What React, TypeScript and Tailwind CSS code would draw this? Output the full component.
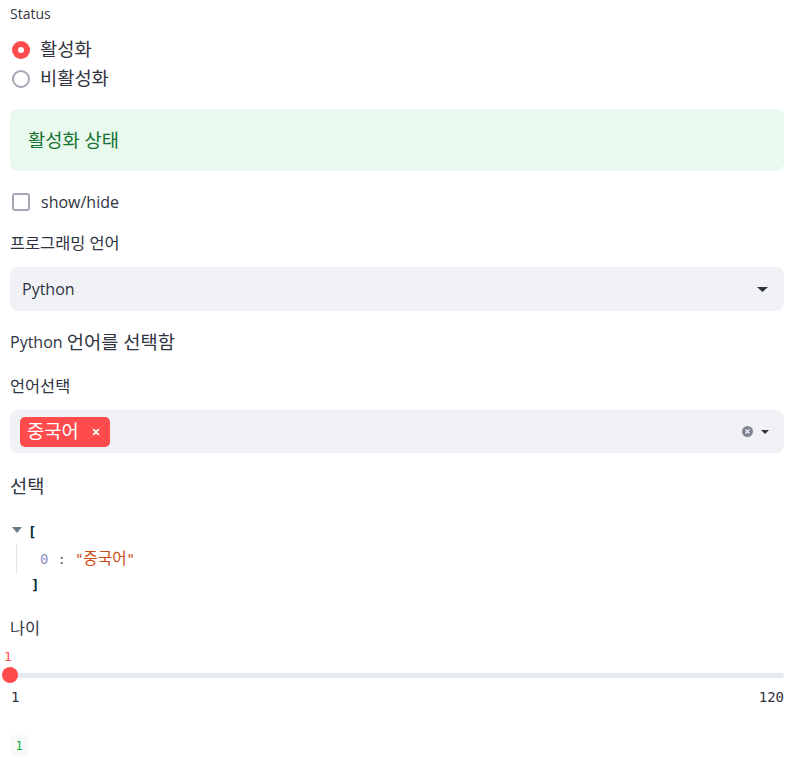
import React from "react";

const sans = { fontFamily: '"Open Sans", "Noto Sans CJK KR", sans-serif' };
const mono = { fontFamily: '"DejaVu Sans Mono", "Noto Sans CJK KR", monospace' };

function K({ children }: { children: React.ReactNode }) {
  return <span className="text-[1.17em] leading-none">{children}</span>;
}

export default function App() {
  return (
    <div className="w-[807px] h-[760px] bg-white text-[#31333f] pl-[10px] pr-[23px] overflow-hidden" style={sans}>
      {/* Status radio */}
      <div className="pt-[4px] h-[24px] text-[14px] leading-[20px]">Status</div>
      <div className="mt-[13px] flex flex-col gap-[4px]">
        <div className="flex items-center h-[25px]">
          <span className="w-[18px] h-[18px] ml-[2px] rounded-full bg-[#ff4b4b] flex items-center justify-center">
            <span className="w-[6px] h-[6px] rounded-full bg-white" />
          </span>
          <span className="ml-[10px] text-[16px]"><K>활성화</K></span>
        </div>
        <div className="flex items-center h-[25px]">
          <span className="w-[18px] h-[18px] ml-[2px] rounded-full border-2 border-[#a3a8b4]" />
          <span className="ml-[10px] text-[16px]"><K>비활성화</K></span>
        </div>
      </div>

      {/* success box */}
      <div className="mt-[18px] h-[62px] rounded-[8px] bg-[#e8f9ee] flex items-center px-[18px] text-[16px] text-[#177233]">
        <K>활성화 상태</K>
      </div>

      {/* checkbox */}
      <div className="mt-[20px] flex items-center h-[22px]">
        <span className="w-[18px] h-[18px] ml-[2px] rounded-[3px] border-2 border-[#a3a8b4]" />
        <span className="ml-[11px] text-[16px]">show/hide</span>
      </div>

      <div className="mt-[20px] h-[20px] flex items-center text-[14px]"><K>프로그래밍 언어</K></div>
      <div className="mt-[14px] h-[44px] rounded-[8px] bg-[#f0f2f6] flex items-center px-[12px]">
        <span className="text-[16px] flex-1">Python</span>
        <svg width="11" height="5" viewBox="0 0 11 5" className="mr-[4px]">
          <path d="M0 0 L11 0 L5.5 5 Z" fill="#31333f" />
        </svg>
      </div>

      <div className="mt-[20px] h-[22px] flex items-center text-[16px] whitespace-pre">Python <K>언어를 선택함</K></div>

      <div className="mt-[23px] h-[20px] flex items-center text-[14px]"><K>언어선택</K></div>
      <div className="mt-[14px] h-[43px] rounded-[8px] bg-[#f0f2f6] flex items-center pl-[10px] pr-[15px]">
        <div className="flex-1 flex">
          <span className="inline-flex items-center h-[30px] rounded-[5px] bg-[#ff4b4b] text-white pl-[7px] pr-[10px] text-[16px]">
            <K>중국어</K>
            <svg width="8" height="8" viewBox="0 0 10 10" className="ml-[13px]">
              <path d="M1.5 1.5 L8.5 8.5 M8.5 1.5 L1.5 8.5" stroke="white" strokeWidth="2.2" />
            </svg>
          </span>
        </div>
        <svg width="11" height="11" viewBox="0 0 12 12" className="mr-[8px]">
          <circle cx="6" cy="6" r="6" fill="#818494" />
          <path d="M3.8 3.8 L8.2 8.2 M8.2 3.8 L3.8 8.2" stroke="#f0f2f6" strokeWidth="1.5" />
        </svg>
        <svg width="8" height="4" viewBox="0 0 8 4">
          <path d="M0 0 L8 0 L4 4 Z" fill="#31333f" />
        </svg>
      </div>

      <div className="mt-[21px] h-[24px] flex items-center text-[16px]"><K>선택</K></div>

      {/* JSON */}
      <div className="mt-[23px] text-[14px] leading-[26px]" style={mono}>
        <div className="flex items-center h-[22px]">
          <svg width="10" height="6" viewBox="0 0 10 6" className="ml-[2px] mb-[5px]">
            <path d="M0 0 L10 0 L5 6 Z" fill="#697d87" />
          </svg>
          <span className="ml-[6px] font-bold text-[#002b36]">[</span>
        </div>
        <div className="ml-[6px] border-l border-[#e6e6e6] h-[31px] flex items-center pl-[23px]">
          <span className="text-[#8d91c7]">0</span>
          <span className="ml-[9px] text-[#586e75]">:</span>
          <span className="ml-[9px] text-[#cb4b16] whitespace-pre">"<span className="text-[1.12em]">중국어</span>"</span>
        </div>
        <div className="h-[22px] flex items-center pl-[21px] font-bold text-[#002b36]">]</div>
      </div>

      <div className="mt-[22px] h-[20px] flex items-center text-[14px]"><K>나이</K></div>

      {/* slider */}
      <div className="mt-[12px]">
        <div className="h-[16px] text-[13px] leading-[14px] text-[#ff4b4b] -ml-[6px]" style={mono}>1</div>
        <div className="relative h-[18px] flex items-center">
          <div className="w-full h-[5px] rounded-full bg-[#e6eaf1]" />
          <div className="absolute left-[-8px] top-[1px] w-[16px] h-[16px] rounded-full bg-[#ff4b4b]" />
        </div>
        <div className="mt-[5px] flex justify-between text-[14px] leading-[16px]" style={mono}>
          <span className="ml-[1px]">1</span>
          <span>120</span>
        </div>
      </div>

      <div className="mt-[30px] inline-flex items-center justify-center w-[18px] h-[21px] rounded-[4px] bg-[#f8f9fb] text-[#09ab3b] text-[12px]" style={mono}>1</div>
    </div>
  );
}
